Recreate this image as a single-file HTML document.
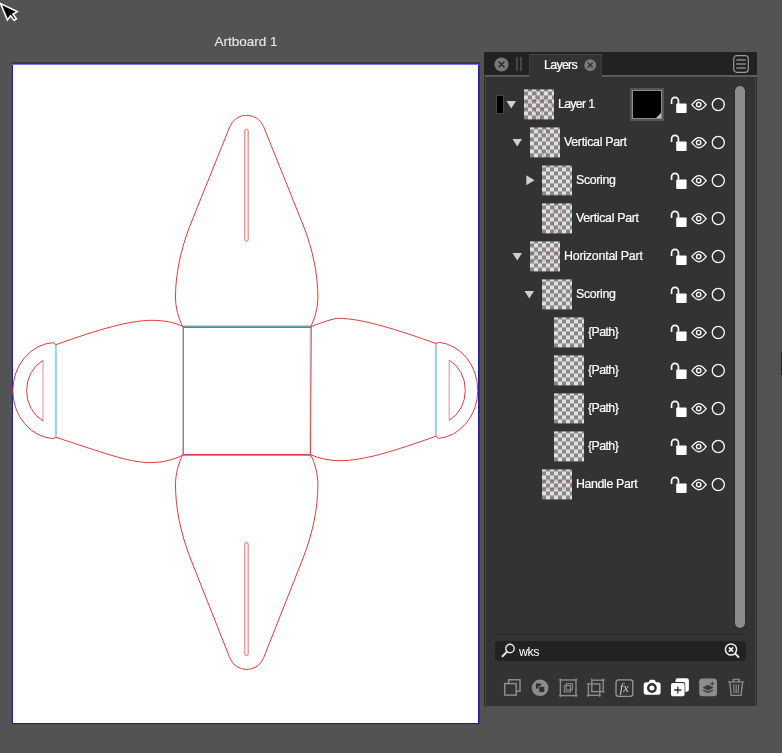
<!DOCTYPE html>
<html><head><meta charset="utf-8"><title>Layers</title>
<style>
*{box-sizing:border-box;margin:0;padding:0}
html,body{width:782px;height:753px;overflow:hidden;background:#535353;font-family:"Liberation Sans",sans-serif}
.abs{position:absolute}
#ab{position:absolute;left:13.3px;top:65px;width:464.7px;height:657.5px;background:#fff}
#abL{position:absolute;left:11.8px;top:63.6px;width:1.6px;height:660.4px;background:#1c1c9c}
#abR{position:absolute;left:478px;top:63.6px;width:1.3px;height:660.4px;background:#1c1c9c}
#abT1{position:absolute;left:12px;top:62.2px;width:467.5px;height:1.4px;background:#3a3a3a}
#abT2{position:absolute;left:12px;top:63.6px;width:467.3px;height:1.4px;background:#7474ee}
#abB{position:absolute;left:12px;top:722.5px;width:467.3px;height:1.5px;background:#1c1c9c}
#abSh{position:absolute;left:479.3px;top:63px;width:.7px;height:661px;background:#3f3f3a}
#abtitle{-webkit-text-stroke:.15px #e6e6e6;position:absolute;left:146px;width:200px;top:33.8px;will-change:transform;text-align:center;font-size:13.5px;color:#e6e6e6;line-height:16px}
svg.art{position:absolute;left:0;top:0}
#panel{position:absolute;left:484px;top:52px;width:272.5px;height:653.8px;background:#333}
#tabbar{position:absolute;left:0;top:0;width:100%;height:23px;background:#222}
#tabline{position:absolute;left:0;top:23px;width:100%;height:1.6px;background:#5c5c5c}
#tab{position:absolute;left:45px;top:2px;width:73px;height:24px;background:#333;border-top:1px solid #484848;border-left:1px solid #3c3c3c;border-right:1px solid #3c3c3c}
#tabtxt{-webkit-text-stroke:.2px #fff;will-change:transform;position:absolute;left:60px;top:5px;font-size:12.4px;color:#fff;letter-spacing:-.7px;line-height:16px}
#pl{position:absolute;left:0;top:24px;width:2px;height:630.6px;background:linear-gradient(90deg,#2c2c2c 0 50%,#474747 50% 100%)}
#pr{position:absolute;left:271px;top:24.6px;width:1.6px;height:629.2px;background:linear-gradient(90deg,#484848 0 55%,#2c2c2c 55% 100%)}
.row{position:absolute;left:0;width:272px;height:38px}
.thumb{position:absolute;top:4px;width:30px;height:30px;transform:translate(0,.4px);will-change:transform;background:repeating-conic-gradient(#878787 0% 25%,#e0e0e0 0% 50%) 0 -2px/8px 8px;overflow:hidden}
.thumb svg{position:absolute;left:0;top:0}
.nm{-webkit-text-stroke:.2px #fff;will-change:transform;position:absolute;top:10.9px;font-size:12.4px;line-height:16px;color:#fff;letter-spacing:-.5px;white-space:nowrap}
.tri{position:absolute}
.ic{position:absolute}
.lock{left:186.2px;top:10.6px}
.eye{left:206.2px;top:12.8px}
.cir{left:225.8px;top:11.4px}
.tag{position:absolute;left:12px;top:10px;width:8px;height:19px;background:#000;border:1px solid #444}
.swatch{position:absolute;left:146px;top:3px;width:34px;height:33px;background:#555;padding:2px}
.sw2{width:100%;height:100%;background:#8c8c8c;padding:1px}
.sw3{width:100%;height:100%;background:#000;position:relative}
.sw3:after{content:"";position:absolute;right:0;bottom:0;border-style:solid;border-width:0 0 5px 5px;border-color:transparent transparent #bdbdbd transparent}
#sbar{position:absolute;left:250.9px;top:34.1px;width:10.1px;height:542.4px;background:#8c8c8c;border-radius:5px;box-shadow:0 0 0 .6px #2c2c2c}
#sep{position:absolute;left:11px;top:582px;width:251px;height:1.4px;background:#282828}
#search{position:absolute;left:11px;top:589.2px;width:251.2px;height:19.6px;background:#222;border-radius:4px}
#stxt{will-change:transform;position:absolute;left:35px;top:592.2px;font-size:12.4px;line-height:16px;color:#fff;letter-spacing:-.4px}
#rstrip{position:absolute;left:780.6px;top:351.8px;width:1.4px;height:22.8px;background:#222}
</style></head>
<body>
<div id="abT1"></div><div id="ab"></div><div id="abL"></div><div id="abR"></div><div id="abT2"></div><div id="abB"></div><div id="abSh"></div>
<div id="abtitle">Artboard 1</div>
<svg class="art" width="782" height="753" viewBox="0 0 782 753" fill="none">
<g stroke="#55b8c8" stroke-width="1.5">
<path d="M182.3 326.15 H311"/>
<path d="M182.3 455.25 H311"/>
<path d="M182.4 326.5 V455.5" stroke-width="1" stroke-opacity=".35"/>
<path d="M310.1 326.5 V459.2" stroke-width="1.2" stroke-opacity=".45"/>
<path d="M183.35 327 V454.8" stroke="#b4727a" stroke-width="1.3"/>
<path d="M55.9 344.6 V437.4" stroke-width="2" stroke-opacity=".6"/>
<path d="M435.9 343.4 V436.2" stroke-width="2" stroke-opacity=".6"/>
</g>
<g stroke="#de3c3c" stroke-width="1">
<path d="M182.6 326.6 C178.5 318 175.5 308 175.5 297 C175.5 275 180.4 250 190.26 225 L229.81 126.61 A18.2 18.2 0 0 1 263.59 126.61 L303.14 225 C313 250 317.9 275 317.9 297 C317.9 308 314.9 318 310.8 326.6"/>
<path d="M182.6 454.8 C178.5 463.53 175.5 473.69 175.5 484.86 C175.5 507.2 180.4 532.59 190.26 557.98 L229.81 657.91 A18.2 18.48 0 0 0 263.59 657.91 L303.14 557.98 C313 532.59 317.9 507.2 317.9 484.86 C317.9 473.69 314.9 463.53 310.8 454.8"/>
<path d="M183.2 326.6 C174 322 163 320.3 152 320.3 C130 320.3 100 329 55.9 344.7 L53.2 342.59 A43.0 48.1 0 0 0 53.2 438.61 L55.9 437.3 C100 451.5 128 462.6 150 462.6 C161 462.6 172 460.5 183.2 455"/>
<path d="M310.8 326.6 C318 324 326 321 332 319.4 C335 318.6 337 318.4 339.5 318.4 C362 318.4 398 330 436 343.5 L438.7 342.24 A43.0 48.300000000000004 0 0 1 438.4 438.46 L436 436.2 C395 450.8 364 460.7 340 460.7 C329 460.7 320 458.5 310.6 454.8"/>
<path d="M43 420.86 A29.3 33.7 0 0 1 43 360.34"/>
<path d="M449.2 420.34 A29.3 33.7 0 0 0 449.2 360.16"/>
<path d="M183.3 454.45 H310.5 M311.2 327.4 H183.2"/>
<path d="M311.25 327 L310.5 454.6"/>
<path d="M244.85 130.85 A1.65 1.65 0 0 1 248.15 130.85 L248.15 239.65 A1.65 1.65 0 0 1 244.85 239.65 Z" stroke-width="0.75"/>
<path d="M244.85 544.15 A1.65 1.65 0 0 1 248.15 544.15 L248.15 653.95 A1.65 1.65 0 0 1 244.85 653.95 Z" stroke-width="0.75"/>
<path d="M43 360.34 V420.86" stroke-width="0.6"/>
<path d="M449.2 360.16 V420.34" stroke-width="0.6"/>
</g>
</svg>
<div id="rstrip"></div>
<div id="panel">
 <div id="tabbar"></div><div id="tabline"></div>
 <div id="tab"></div>
 <div id="tabtxt">Layers</div>
 <!-- left close -->
 <svg class="abs" style="left:9.5px;top:4.5px" width="15" height="15" viewBox="0 0 15 15"><circle cx="7.5" cy="7.5" r="7" fill="#7a7a7a"/><path d="M4.5 4.5 L10.5 10.5 M10.5 4.5 L4.5 10.5" stroke="#222" stroke-width="1.15"/></svg>
 <div class="abs" style="left:32.3px;top:4.6px;width:1.7px;height:14.4px;background:#484848"></div>
 <div class="abs" style="left:36.3px;top:4.6px;width:1.7px;height:14.4px;background:#484848"></div>
 <!-- tab close -->
 <svg class="abs" style="left:100px;top:7px" width="12.4" height="12.4" viewBox="0 0 13 13"><circle cx="6.5" cy="6.5" r="6.2" fill="#7a7a7a"/><path d="M3.9 3.9 L9.1 9.1 M9.1 3.9 L3.9 9.1" stroke="#262626" stroke-width="1.15"/></svg>
 <!-- menu icon -->
 <svg class="abs" style="left:249px;top:3.2px" width="16" height="18" viewBox="0 0 16 18"><rect x="0.7" y="0.7" width="14.6" height="16.6" rx="3" fill="none" stroke="#9a9a9a" stroke-width="1.2"/><path d="M3.3 5 H12.7 M3.3 9 H12.7 M3.3 13 H12.7" stroke="#8a8a8a" stroke-width="1.6"/></svg>
 <div id="pl"></div><div id="pr"></div>
 <div id="rows" class="abs" style="left:0;top:-52px">
<div class="row" style="top:85px"><div class="tag"></div><div class="swatch"><div class="sw2"><div class="sw3"></div></div></div><svg class="tri" style="left:22px;top:15px" width="11" height="9" viewBox="0 0 11 9"><path d="M0.5 0.9 H10 L5.25 8.6 Z" fill="#d0d0d0"/></svg><div class="thumb" style="left:40px"><svg width="30" height="30" viewBox="0 0 30 30" fill="none"><g transform="translate(2.42 0.00) scale(0.05407) translate(-13.3 -114.8)" stroke="#8a2828" stroke-opacity=".8" stroke-width="10.17" stroke-dasharray="40.7 9.2"><path d="M182.6 326.6 C178.5 318 175.5 308 175.5 297 C175.5 275 180.4 250 190.26 225 L229.81 126.61 A18.2 18.2 0 0 1 263.59 126.61 L303.14 225 C313 250 317.9 275 317.9 297 C317.9 308 314.9 318 310.8 326.6"/><path d="M182.6 454.8 C178.5 463.53 175.5 473.69 175.5 484.86 C175.5 507.2 180.4 532.59 190.26 557.98 L229.81 657.91 A18.2 18.48 0 0 0 263.59 657.91 L303.14 557.98 C313 532.59 317.9 507.2 317.9 484.86 C317.9 473.69 314.9 463.53 310.8 454.8"/><path d="M183.2 326.6 C174 322 163 320.3 152 320.3 C130 320.3 100 329 55.9 344.7 L53.2 342.59 A43.0 48.1 0 0 0 53.2 438.61 L55.9 437.3 C100 451.5 128 462.6 150 462.6 C161 462.6 172 460.5 183.2 455"/><path d="M310.8 326.6 C318 324 326 321 332 319.4 C335 318.6 337 318.4 339.5 318.4 C362 318.4 398 330 436 343.5 L438.7 342.24 A43.0 48.300000000000004 0 0 1 438.4 438.46 L436 436.2 C395 450.8 364 460.7 340 460.7 C329 460.7 320 458.5 310.6 454.8"/><path d="M183.3 454.45 H310.5 M311.2 327.4 H183.2"/></g></svg></div><div class="nm" style="left:74px;letter-spacing:-0.71px">Layer 1</div><svg class="ic lock" width="18" height="18" viewBox="0 0 18 18"><path d="M1.55 7.9 V4.9 A3.45 3.45 0 0 1 8.45 4.9 V8" fill="none" stroke="#fff" stroke-width="1.7"/><rect x="6.2" y="7.5" width="10.4" height="9.5" rx="0.8" fill="#fff"/></svg><svg class="ic eye" width="18" height="14" viewBox="0 0 18 14"><path d="M1.85 6.7 C4.5 3.2 6.8 1.6 9 1.6 C11.2 1.6 13.5 3.2 16.15 6.7 C13.5 10.2 11.2 11.85 9 11.85 C6.8 11.85 4.5 10.2 1.85 6.7 Z" fill="none" stroke="#fff" stroke-width="1.3"/><circle cx="8.7" cy="6.6" r="2.2" fill="none" stroke="#fff" stroke-width="1.4"/></svg><svg class="ic cir" width="16" height="16" viewBox="0 0 16 16"><circle cx="8.3" cy="8.5" r="6.05" fill="none" stroke="#fff" stroke-width="1.3"/></svg></div>
<div class="row" style="top:123px"><svg class="tri" style="left:28px;top:15px" width="11" height="9" viewBox="0 0 11 9"><path d="M0.5 0.9 H10 L5.25 8.6 Z" fill="#d0d0d0"/></svg><div class="thumb" style="left:46px"><svg width="30" height="30" viewBox="0 0 30 30" fill="none"><g transform="translate(11.14 0.00) scale(0.05407) translate(-175.4 -114.8)" stroke="#8a2828" stroke-opacity=".8" stroke-width="10.17" stroke-dasharray="40.7 9.2"><path d="M182.6 326.6 C178.5 318 175.5 308 175.5 297 C175.5 275 180.4 250 190.26 225 L229.81 126.61 A18.2 18.2 0 0 1 263.59 126.61 L303.14 225 C313 250 317.9 275 317.9 297 C317.9 308 314.9 318 310.8 326.6"/><path d="M182.6 454.8 C178.5 463.53 175.5 473.69 175.5 484.86 C175.5 507.2 180.4 532.59 190.26 557.98 L229.81 657.91 A18.2 18.48 0 0 0 263.59 657.91 L303.14 557.98 C313 532.59 317.9 507.2 317.9 484.86 C317.9 473.69 314.9 463.53 310.8 454.8"/></g></svg></div><div class="nm" style="left:80px;letter-spacing:-0.32px">Vertical Part</div><svg class="ic lock" width="18" height="18" viewBox="0 0 18 18"><path d="M1.55 7.9 V4.9 A3.45 3.45 0 0 1 8.45 4.9 V8" fill="none" stroke="#fff" stroke-width="1.7"/><rect x="6.2" y="7.5" width="10.4" height="9.5" rx="0.8" fill="#fff"/></svg><svg class="ic eye" width="18" height="14" viewBox="0 0 18 14"><path d="M1.85 6.7 C4.5 3.2 6.8 1.6 9 1.6 C11.2 1.6 13.5 3.2 16.15 6.7 C13.5 10.2 11.2 11.85 9 11.85 C6.8 11.85 4.5 10.2 1.85 6.7 Z" fill="none" stroke="#fff" stroke-width="1.3"/><circle cx="8.7" cy="6.6" r="2.2" fill="none" stroke="#fff" stroke-width="1.4"/></svg><svg class="ic cir" width="16" height="16" viewBox="0 0 16 16"><circle cx="8.3" cy="8.5" r="6.05" fill="none" stroke="#fff" stroke-width="1.3"/></svg></div>
<div class="row" style="top:161px"><svg class="tri" style="left:42px;top:14px" width="9" height="11" viewBox="0 0 9 11"><path d="M0.3 0.3 V10.3 L8.6 5.3 Z" fill="#d0d0d0"/></svg><div class="thumb" style="left:58px"><svg width="30" height="30" viewBox="0 0 30 30"><path d="M0 0.3 H30 M0 29.7 H30" stroke="#4f8f98" stroke-opacity=".7" stroke-width=".8"/></svg></div><div class="nm" style="left:92px;letter-spacing:-0.37px">Scoring</div><svg class="ic lock" width="18" height="18" viewBox="0 0 18 18"><path d="M1.55 7.9 V4.9 A3.45 3.45 0 0 1 8.45 4.9 V8" fill="none" stroke="#fff" stroke-width="1.7"/><rect x="6.2" y="7.5" width="10.4" height="9.5" rx="0.8" fill="#fff"/></svg><svg class="ic eye" width="18" height="14" viewBox="0 0 18 14"><path d="M1.85 6.7 C4.5 3.2 6.8 1.6 9 1.6 C11.2 1.6 13.5 3.2 16.15 6.7 C13.5 10.2 11.2 11.85 9 11.85 C6.8 11.85 4.5 10.2 1.85 6.7 Z" fill="none" stroke="#fff" stroke-width="1.3"/><circle cx="8.7" cy="6.6" r="2.2" fill="none" stroke="#fff" stroke-width="1.4"/></svg><svg class="ic cir" width="16" height="16" viewBox="0 0 16 16"><circle cx="8.3" cy="8.5" r="6.05" fill="none" stroke="#fff" stroke-width="1.3"/></svg></div>
<div class="row" style="top:199px"><div class="thumb" style="left:58px"><svg width="30" height="30" viewBox="0 0 30 30" fill="none"><g transform="translate(11.14 0.00) scale(0.05407) translate(-175.4 -114.8)" stroke="#8a2828" stroke-opacity=".8" stroke-width="10.17" stroke-dasharray="40.7 9.2"><path d="M182.6 326.6 C178.5 318 175.5 308 175.5 297 C175.5 275 180.4 250 190.26 225 L229.81 126.61 A18.2 18.2 0 0 1 263.59 126.61 L303.14 225 C313 250 317.9 275 317.9 297 C317.9 308 314.9 318 310.8 326.6"/><path d="M182.6 454.8 C178.5 463.53 175.5 473.69 175.5 484.86 C175.5 507.2 180.4 532.59 190.26 557.98 L229.81 657.91 A18.2 18.48 0 0 0 263.59 657.91 L303.14 557.98 C313 532.59 317.9 507.2 317.9 484.86 C317.9 473.69 314.9 463.53 310.8 454.8"/></g></svg></div><div class="nm" style="left:92px;letter-spacing:-0.32px">Vertical Part</div><svg class="ic lock" width="18" height="18" viewBox="0 0 18 18"><path d="M1.55 7.9 V4.9 A3.45 3.45 0 0 1 8.45 4.9 V8" fill="none" stroke="#fff" stroke-width="1.7"/><rect x="6.2" y="7.5" width="10.4" height="9.5" rx="0.8" fill="#fff"/></svg><svg class="ic eye" width="18" height="14" viewBox="0 0 18 14"><path d="M1.85 6.7 C4.5 3.2 6.8 1.6 9 1.6 C11.2 1.6 13.5 3.2 16.15 6.7 C13.5 10.2 11.2 11.85 9 11.85 C6.8 11.85 4.5 10.2 1.85 6.7 Z" fill="none" stroke="#fff" stroke-width="1.3"/><circle cx="8.7" cy="6.6" r="2.2" fill="none" stroke="#fff" stroke-width="1.4"/></svg><svg class="ic cir" width="16" height="16" viewBox="0 0 16 16"><circle cx="8.3" cy="8.5" r="6.05" fill="none" stroke="#fff" stroke-width="1.3"/></svg></div>
<div class="row" style="top:237px"><svg class="tri" style="left:28px;top:15px" width="11" height="9" viewBox="0 0 11 9"><path d="M0.5 0.9 H10 L5.25 8.6 Z" fill="#d0d0d0"/></svg><div class="thumb" style="left:46px"><svg width="30" height="30" viewBox="0 0 30 30" fill="none"><g transform="translate(-0.00 10.36) scale(0.06447) translate(-13.3 -318.6)" stroke="#8a2828" stroke-opacity=".8" stroke-width="8.53" stroke-dasharray="34.1 7.8"><path d="M183.2 326.6 C174 322 163 320.3 152 320.3 C130 320.3 100 329 55.9 344.7 L53.2 342.59 A43.0 48.1 0 0 0 53.2 438.61 L55.9 437.3 C100 451.5 128 462.6 150 462.6 C161 462.6 172 460.5 183.2 455"/><path d="M310.8 326.6 C318 324 326 321 332 319.4 C335 318.6 337 318.4 339.5 318.4 C362 318.4 398 330 436 343.5 L438.7 342.24 A43.0 48.300000000000004 0 0 1 438.4 438.46 L436 436.2 C395 450.8 364 460.7 340 460.7 C329 460.7 320 458.5 310.6 454.8"/><path d="M183.3 454.45 H310.5 M311.2 327.4 H183.2"/></g></svg></div><div class="nm" style="left:80px;letter-spacing:-0.22px">Horizontal Part</div><svg class="ic lock" width="18" height="18" viewBox="0 0 18 18"><path d="M1.55 7.9 V4.9 A3.45 3.45 0 0 1 8.45 4.9 V8" fill="none" stroke="#fff" stroke-width="1.7"/><rect x="6.2" y="7.5" width="10.4" height="9.5" rx="0.8" fill="#fff"/></svg><svg class="ic eye" width="18" height="14" viewBox="0 0 18 14"><path d="M1.85 6.7 C4.5 3.2 6.8 1.6 9 1.6 C11.2 1.6 13.5 3.2 16.15 6.7 C13.5 10.2 11.2 11.85 9 11.85 C6.8 11.85 4.5 10.2 1.85 6.7 Z" fill="none" stroke="#fff" stroke-width="1.3"/><circle cx="8.7" cy="6.6" r="2.2" fill="none" stroke="#fff" stroke-width="1.4"/></svg><svg class="ic cir" width="16" height="16" viewBox="0 0 16 16"><circle cx="8.3" cy="8.5" r="6.05" fill="none" stroke="#fff" stroke-width="1.3"/></svg></div>
<div class="row" style="top:275px"><svg class="tri" style="left:40px;top:15px" width="11" height="9" viewBox="0 0 11 9"><path d="M0.5 0.9 H10 L5.25 8.6 Z" fill="#d0d0d0"/></svg><div class="thumb" style="left:58px"><svg width="30" height="30" viewBox="0 0 30 30"><path d="M10 10 V20 M20 10 V20 M0.3 11.3 V18.7 M29.7 11.3 V18.7" stroke="#4f8f98" stroke-opacity=".55" stroke-width=".8"/></svg></div><div class="nm" style="left:92px;letter-spacing:-0.37px">Scoring</div><svg class="ic lock" width="18" height="18" viewBox="0 0 18 18"><path d="M1.55 7.9 V4.9 A3.45 3.45 0 0 1 8.45 4.9 V8" fill="none" stroke="#fff" stroke-width="1.7"/><rect x="6.2" y="7.5" width="10.4" height="9.5" rx="0.8" fill="#fff"/></svg><svg class="ic eye" width="18" height="14" viewBox="0 0 18 14"><path d="M1.85 6.7 C4.5 3.2 6.8 1.6 9 1.6 C11.2 1.6 13.5 3.2 16.15 6.7 C13.5 10.2 11.2 11.85 9 11.85 C6.8 11.85 4.5 10.2 1.85 6.7 Z" fill="none" stroke="#fff" stroke-width="1.3"/><circle cx="8.7" cy="6.6" r="2.2" fill="none" stroke="#fff" stroke-width="1.4"/></svg><svg class="ic cir" width="16" height="16" viewBox="0 0 16 16"><circle cx="8.3" cy="8.5" r="6.05" fill="none" stroke="#fff" stroke-width="1.3"/></svg></div>
<div class="row" style="top:313px"><div class="thumb" style="left:70px"></div><div class="nm" style="left:104px;letter-spacing:-0.6px">{Path}</div><svg class="ic lock" width="18" height="18" viewBox="0 0 18 18"><path d="M1.55 7.9 V4.9 A3.45 3.45 0 0 1 8.45 4.9 V8" fill="none" stroke="#fff" stroke-width="1.7"/><rect x="6.2" y="7.5" width="10.4" height="9.5" rx="0.8" fill="#fff"/></svg><svg class="ic eye" width="18" height="14" viewBox="0 0 18 14"><path d="M1.85 6.7 C4.5 3.2 6.8 1.6 9 1.6 C11.2 1.6 13.5 3.2 16.15 6.7 C13.5 10.2 11.2 11.85 9 11.85 C6.8 11.85 4.5 10.2 1.85 6.7 Z" fill="none" stroke="#fff" stroke-width="1.3"/><circle cx="8.7" cy="6.6" r="2.2" fill="none" stroke="#fff" stroke-width="1.4"/></svg><svg class="ic cir" width="16" height="16" viewBox="0 0 16 16"><circle cx="8.3" cy="8.5" r="6.05" fill="none" stroke="#fff" stroke-width="1.3"/></svg></div>
<div class="row" style="top:351px"><div class="thumb" style="left:70px"></div><div class="nm" style="left:104px;letter-spacing:-0.6px">{Path}</div><svg class="ic lock" width="18" height="18" viewBox="0 0 18 18"><path d="M1.55 7.9 V4.9 A3.45 3.45 0 0 1 8.45 4.9 V8" fill="none" stroke="#fff" stroke-width="1.7"/><rect x="6.2" y="7.5" width="10.4" height="9.5" rx="0.8" fill="#fff"/></svg><svg class="ic eye" width="18" height="14" viewBox="0 0 18 14"><path d="M1.85 6.7 C4.5 3.2 6.8 1.6 9 1.6 C11.2 1.6 13.5 3.2 16.15 6.7 C13.5 10.2 11.2 11.85 9 11.85 C6.8 11.85 4.5 10.2 1.85 6.7 Z" fill="none" stroke="#fff" stroke-width="1.3"/><circle cx="8.7" cy="6.6" r="2.2" fill="none" stroke="#fff" stroke-width="1.4"/></svg><svg class="ic cir" width="16" height="16" viewBox="0 0 16 16"><circle cx="8.3" cy="8.5" r="6.05" fill="none" stroke="#fff" stroke-width="1.3"/></svg></div>
<div class="row" style="top:389px"><div class="thumb" style="left:70px"></div><div class="nm" style="left:104px;letter-spacing:-0.6px">{Path}</div><svg class="ic lock" width="18" height="18" viewBox="0 0 18 18"><path d="M1.55 7.9 V4.9 A3.45 3.45 0 0 1 8.45 4.9 V8" fill="none" stroke="#fff" stroke-width="1.7"/><rect x="6.2" y="7.5" width="10.4" height="9.5" rx="0.8" fill="#fff"/></svg><svg class="ic eye" width="18" height="14" viewBox="0 0 18 14"><path d="M1.85 6.7 C4.5 3.2 6.8 1.6 9 1.6 C11.2 1.6 13.5 3.2 16.15 6.7 C13.5 10.2 11.2 11.85 9 11.85 C6.8 11.85 4.5 10.2 1.85 6.7 Z" fill="none" stroke="#fff" stroke-width="1.3"/><circle cx="8.7" cy="6.6" r="2.2" fill="none" stroke="#fff" stroke-width="1.4"/></svg><svg class="ic cir" width="16" height="16" viewBox="0 0 16 16"><circle cx="8.3" cy="8.5" r="6.05" fill="none" stroke="#fff" stroke-width="1.3"/></svg></div>
<div class="row" style="top:427px"><div class="thumb" style="left:70px"></div><div class="nm" style="left:104px;letter-spacing:-0.6px">{Path}</div><svg class="ic lock" width="18" height="18" viewBox="0 0 18 18"><path d="M1.55 7.9 V4.9 A3.45 3.45 0 0 1 8.45 4.9 V8" fill="none" stroke="#fff" stroke-width="1.7"/><rect x="6.2" y="7.5" width="10.4" height="9.5" rx="0.8" fill="#fff"/></svg><svg class="ic eye" width="18" height="14" viewBox="0 0 18 14"><path d="M1.85 6.7 C4.5 3.2 6.8 1.6 9 1.6 C11.2 1.6 13.5 3.2 16.15 6.7 C13.5 10.2 11.2 11.85 9 11.85 C6.8 11.85 4.5 10.2 1.85 6.7 Z" fill="none" stroke="#fff" stroke-width="1.3"/><circle cx="8.7" cy="6.6" r="2.2" fill="none" stroke="#fff" stroke-width="1.4"/></svg><svg class="ic cir" width="16" height="16" viewBox="0 0 16 16"><circle cx="8.3" cy="8.5" r="6.05" fill="none" stroke="#fff" stroke-width="1.3"/></svg></div>
<div class="row" style="top:465px"><div class="thumb" style="left:58px"><svg width="30" height="30" viewBox="0 0 30 30" fill="none"><g transform="translate(-0.00 10.36) scale(0.06447) translate(-13.3 -318.6)" stroke="#8a2828" stroke-opacity=".8" stroke-width="8.53" stroke-dasharray="34.1 7.8"><path d="M183.2 326.6 C174 322 163 320.3 152 320.3 C130 320.3 100 329 55.9 344.7 L53.2 342.59 A43.0 48.1 0 0 0 53.2 438.61 L55.9 437.3 C100 451.5 128 462.6 150 462.6 C161 462.6 172 460.5 183.2 455"/><path d="M310.8 326.6 C318 324 326 321 332 319.4 C335 318.6 337 318.4 339.5 318.4 C362 318.4 398 330 436 343.5 L438.7 342.24 A43.0 48.300000000000004 0 0 1 438.4 438.46 L436 436.2 C395 450.8 364 460.7 340 460.7 C329 460.7 320 458.5 310.6 454.8"/><path d="M183.3 454.45 H310.5 M311.2 327.4 H183.2"/></g></svg></div><div class="nm" style="left:92px;letter-spacing:-0.38px">Handle Part</div><svg class="ic lock" width="18" height="18" viewBox="0 0 18 18"><path d="M1.55 7.9 V4.9 A3.45 3.45 0 0 1 8.45 4.9 V8" fill="none" stroke="#fff" stroke-width="1.7"/><rect x="6.2" y="7.5" width="10.4" height="9.5" rx="0.8" fill="#fff"/></svg><svg class="ic eye" width="18" height="14" viewBox="0 0 18 14"><path d="M1.85 6.7 C4.5 3.2 6.8 1.6 9 1.6 C11.2 1.6 13.5 3.2 16.15 6.7 C13.5 10.2 11.2 11.85 9 11.85 C6.8 11.85 4.5 10.2 1.85 6.7 Z" fill="none" stroke="#fff" stroke-width="1.3"/><circle cx="8.7" cy="6.6" r="2.2" fill="none" stroke="#fff" stroke-width="1.4"/></svg><svg class="ic cir" width="16" height="16" viewBox="0 0 16 16"><circle cx="8.3" cy="8.5" r="6.05" fill="none" stroke="#fff" stroke-width="1.3"/></svg></div>
 </div>
 <div id="sbar"></div>
 <div id="sep"></div>
 <div id="search"></div>
 <svg class="abs" style="left:17px;top:590px" width="16" height="16" viewBox="0 0 16 16"><circle cx="9" cy="6.5" r="4.2" fill="none" stroke="#e8e8e8" stroke-width="1.4"/><path d="M6 9.6 L1.5 14.2" stroke="#e8e8e8" stroke-width="2" stroke-linecap="round"/></svg>
 <div id="stxt">wks</div>
 <svg class="abs" style="left:238.8px;top:589.8px" width="18" height="18" viewBox="0 0 18 18"><circle cx="8" cy="7.5" r="5.6" fill="none" stroke="#f0f0f0" stroke-width="1.5"/><path d="M5.9 5.4 L10.1 9.6 M10.1 5.4 L5.9 9.6" stroke="#f0f0f0" stroke-width="1.6"/><path d="M12.2 11.7 L15.5 15" stroke="#f0f0f0" stroke-width="1.8" stroke-linecap="round"/></svg>
 <!-- bottom icons -->
 <svg class="abs" style="left:19px;top:625.5px;will-change:transform" width="250" height="20" viewBox="0 0 250 20" fill="none">
  <!-- 1 two squares -->
  <g stroke="#8c8c8c" stroke-width="1.5"><path d="M5.6 5 V1.8 H17 V13.2 H13.6"/><rect x="1.7" y="5.6" width="11.5" height="11.5"/></g>
  <!-- 2 circle -->
  <circle cx="37.1" cy="9.8" r="8.3" fill="#8c8c8c"/><g stroke="#8c8c8c" stroke-width=".9" fill="#2f2f2f"><rect x="32.4" y="5" width="6" height="6"/><rect x="35.8" y="8.4" width="6" height="6"/></g>
  <!-- 3 -->
  <g stroke="#8c8c8c" stroke-width="1.4"><rect x="57.4" y="2" width="15.6" height="15.6"/><path d="M55.9 2 H57.4 M73 2 H74.5 M55.9 17.6 H57.4 M73 17.6 H74.5 M57.4 .5 V2 M73 .5 V2 M57.4 17.6 V19.1 M73 17.6 V19.1" stroke-width="1.2"/><rect x="63.2" y="5.7" width="6.2" height="6.2" stroke-width="1.1"/><rect x="61.3" y="7.6" width="6.2" height="6.2" stroke-width="1.1"/></g>
  <!-- 4 -->
  <g stroke="#8c8c8c" stroke-width="1.4"><rect x="88.8" y="2.2" width="11.4" height="11.4"/><rect x="85.4" y="5.9" width="11.4" height="11.4"/><path d="M88.8 .6 V2.2 M100.2 .6 V2.2 M100.2 2.2 H101.8 M100.2 13.6 H101.8 M83.8 5.9 H85.4 M83.8 17.3 H85.4 M85.4 17.3 V18.9 M96.8 17.3 V18.9" stroke-width="1.2"/></g>
  <!-- 5 fx -->
  <rect x="113" y="1.9" width="16.8" height="16.4" rx="2.6" stroke="#9a9a9a" stroke-width="1.3"/>
  <text x="121.3" y="13.6" text-anchor="middle" font-family="Liberation Serif, serif" font-style="italic" font-size="12.5" fill="#cfcfcf" stroke="none">fx</text>
  <!-- 6 camera -->
  <path d="M143.2 4.2 H145.6 L146.8 1.9 Q147 1.7 147.4 1.7 H151.2 Q151.6 1.7 151.8 1.9 L153 4.2 H155.1 Q157.6 4.2 157.6 6.7 V14.2 Q157.6 16.7 155.1 16.7 H143.2 Q140.7 16.7 140.7 14.2 V6.7 Q140.7 4.2 143.2 4.2 Z" fill="#fff"/><circle cx="148.9" cy="10" r="3.7" fill="#fff" stroke="#303030" stroke-width="2.4"/>
  <!-- 7 add -->
  <rect x="172.5" y=".3" width="13.4" height="13.5" rx="2.2" fill="#fff"/>
  <rect x="167.3" y="4.1" width="15" height="15" rx="2.4" fill="#333"/>
  <rect x="168" y="4.9" width="13.6" height="13.3" rx="1.8" fill="#fff"/><path d="M174.8 8.4 V15.6 M171.2 12 H178.4" stroke="#303030" stroke-width="1.3"/>
  <!-- 8 grey -->
  <rect x="196.2" y=".4" width="17.8" height="17.8" rx="3.2" fill="#8c8c8c"/>
  <path d="M200.2 9.6 L205 7.2 L209.8 9.6 L205 12 Z" fill="#383838" stroke="#383838" stroke-width=".8" stroke-linejoin="round"/><path d="M200.2 12 L205 14.4 L209.8 12" fill="none" stroke="#383838" stroke-width="1.3" stroke-linejoin="round"/><path d="M209.3 3.9 V7.5 M207.5 5.7 H211.1" stroke="#383838" stroke-width="1"/>
  <!-- 9 trash -->
  <g stroke="#8c8c8c" stroke-width="1.4"><path d="M225 3.9 H241.3 M230.4 3.7 V1.4 H236 V3.7"/><path d="M226.8 4.2 L228.2 17.4 H238.1 L239.5 4.2"/><path d="M230.7 6.4 L231.1 15.2 M233.15 6.4 V15.2 M235.6 6.4 L235.2 15.2" stroke-width="1.2"/></g>
 </svg>
</div>
<!-- cursor -->
<svg class="abs" style="left:0;top:0" width="24" height="24" viewBox="0 0 24 24"><path d="M0.6 3.6 L7.4 20 L10.6 15.8 L14.2 20.4 L16.4 18.9 L12.9 14.2 L17.2 11.6 Z" fill="#000" stroke="#fff" stroke-width="1.6" stroke-linejoin="miter"/></svg>
</body></html>
